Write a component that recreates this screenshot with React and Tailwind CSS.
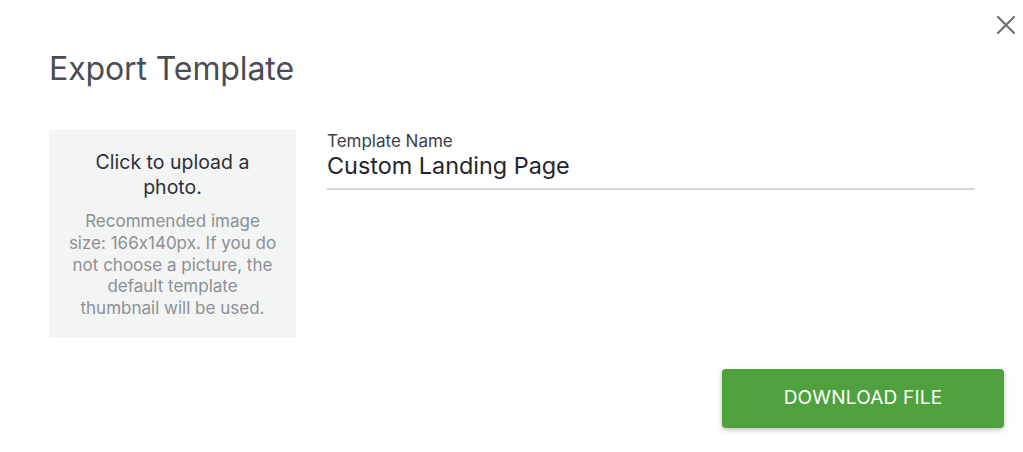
import React from "react";

export default function App() {
  return (
    <div className="relative w-[1023px] h-[452px] bg-white [font-feature-settings:'calt'_0]" style={{ fontFamily: "Inter, 'Noto Sans', sans-serif" }}>
      <button className="absolute right-[5px] top-[13px] w-[24px] h-[24px] flex items-center justify-center text-[#6d7175]">
        <svg width="20" height="20" viewBox="0 0 20 20" fill="none" stroke="currentColor" strokeWidth="2.2" strokeLinecap="round">
          <path d="M2 2 L18 18 M18 2 L2 18" />
        </svg>
      </button>
      <div className="pl-[49px] pr-[19px] pt-[49px]">
        <h1 className="text-[32px] leading-[40px] text-[#4a4d55] font-normal tracking-[-0.1px]">Export Template</h1>
        <div className="flex mt-[41px]">
          <div className="w-[247px] h-[208px] bg-[#f3f4f4] flex flex-col items-center pt-[20px] px-[10px] text-center">
            <div className="text-[19.5px] leading-[25px] text-[#2e3035]">
              <span className="block">Click to upload a</span>
              <span className="block">photo.</span>
            </div>
            <div className="mt-[11px] text-[17px] leading-[21.8px] text-[#8c9095]">
              <span className="block">Recommended image</span>
              <span className="block">size: 166x140px. If you do</span>
              <span className="block">not choose a picture, the</span>
              <span className="block">default template</span>
              <span className="block">thumbnail will be used.</span>
            </div>
          </div>
          <div className="ml-[31px] flex-1 pt-[1px] pr-[29px]">
            <div className="text-[17px] leading-[20px] text-[#3c3f44]">Template Name</div>
            <div className="text-[23.4px] leading-[30px] text-[#24262a] pb-[7px] border-b-2 border-[#d7d8da]">Custom Landing Page</div>
          </div>
        </div>
        <div className="flex justify-end mt-[31px]">
          <button className="w-[282px] h-[59px] rounded-[4px] bg-[#4fa13d] text-white text-[19px] tracking-[0.2px] shadow-[0_2px_5px_rgba(0,0,0,0.25)]">
            DOWNLOAD FILE
          </button>
        </div>
      </div>
    </div>
  );
}
